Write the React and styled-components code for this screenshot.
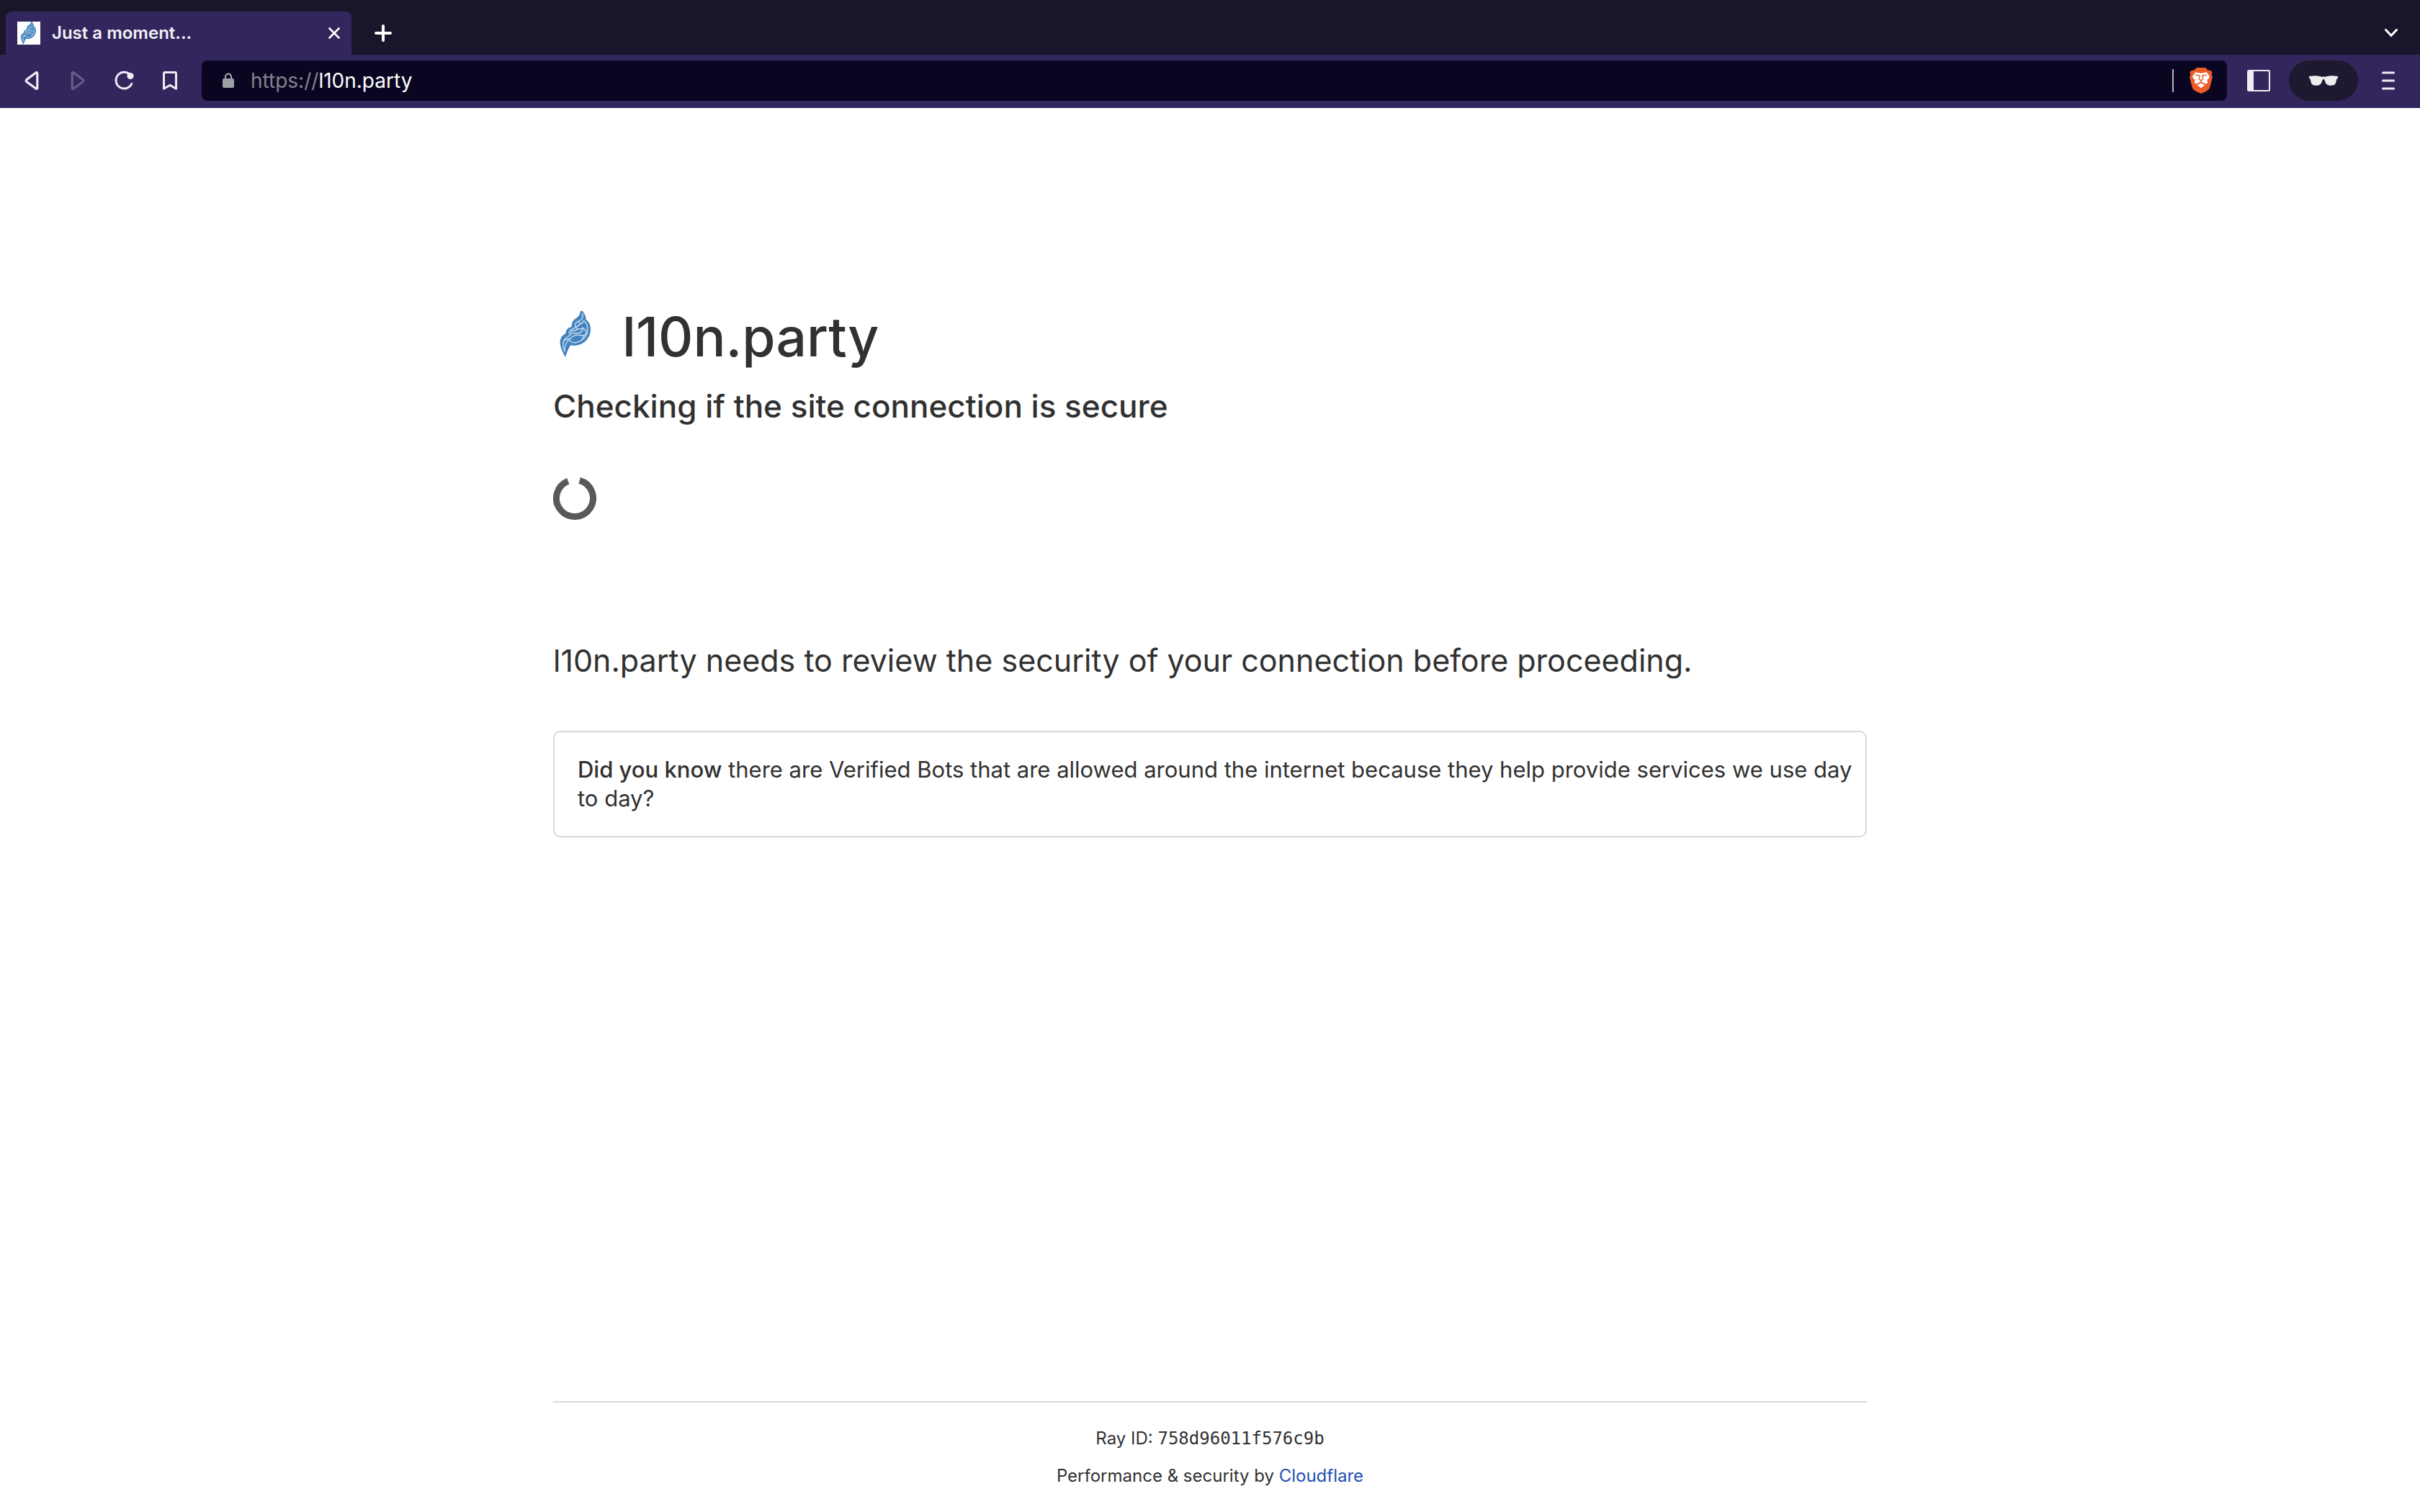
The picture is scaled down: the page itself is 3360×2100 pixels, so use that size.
import React from "react";
import styled, { createGlobalStyle, css } from "styled-components";

const sans = `Inter, "Liberation Sans", sans-serif`;
const mono = `"DejaVu Sans Mono", "Liberation Mono", monospace`;

const GlobalStyle = createGlobalStyle`
  *, *::before, *::after { box-sizing: border-box; }
  body {
    margin: 0;
    background: #fff;
    color: #313131;
    font-family: ${sans};
  }
`;

const Window = styled.div`
  display: flex;
  flex-direction: column;
  min-height: 100vh;
`;

/* ---------- browser chrome ---------- */

const bareButton = css`
  display: flex;
  align-items: center;
  justify-content: center;
  padding: 0;
  border: 0;
  background: none;
  color: inherit;
  font: inherit;
  cursor: pointer;
`;

const TabStrip = styled.header`
  display: flex;
  align-items: flex-end;
  height: 76px;
  padding: 0 16px 0 8px;
  background: #19162b;
  color: #fff;
`;

const Tab = styled.div`
  display: flex;
  align-items: center;
  gap: 16px;
  width: 480px;
  height: 60px;
  padding: 0 8px 0 16px;
  border-radius: 8px 8px 0 0;
  background: #32265c;
`;

const Favicon = styled.span`
  display: flex;
  width: 32px;
  height: 32px;
  background: #fff;
`;

const TabTitle = styled.span`
  flex: 1;
  font-size: 24px;
  line-height: 32px;
  font-weight: 600;
  color: #f1eff7;
`;

const StripButton = styled.button`
  ${bareButton}
  width: ${(p) => p.$width}px;
  height: 60px;
`;

const Spacer = styled.div`
  flex: 1;
`;

const Toolbar = styled.nav`
  display: flex;
  align-items: center;
  height: 74px;
  padding: 0 12px 2px;
  background: #32265c;
  color: #eeebf5;
`;

const ToolButton = styled.button`
  ${bareButton}
  width: 64px;
  height: 56px;
  opacity: ${(p) => (p.disabled ? 0.28 : 1)};
`;

const AddressBar = styled.form`
  display: flex;
  align-items: center;
  flex: 1;
  height: 56px;
  margin: 0 12px;
  padding: 0 20px 0 28px;
  border-radius: 8px;
  background: #0a0622;
  font-size: 28px;
  line-height: 36px;
`;

const Scheme = styled.label`
  margin-left: 22px;
  color: #85828f;
`;

const Address = styled.input`
  flex: 1;
  min-width: 0;
  padding: 0;
  border: 0;
  outline: 0;
  background: none;
  color: #fff;
  font: inherit;
`;

const BarDivider = styled.span`
  width: 2px;
  height: 32px;
  margin-right: 22px;
  background: #b5b4bd;
`;

const ShieldButton = styled.button`
  ${bareButton}
  width: 32px;
  height: 36px;
`;

const PrivatePill = styled.button`
  ${bareButton}
  width: 96px;
  height: 56px;
  margin: 0 10px;
  border-radius: 28px;
  background: #1d1930;
`;

/* ---------- page ---------- */

const Page = styled.div`
  display: flex;
  flex: 1;
  flex-direction: column;
  width: 100%;
  max-width: 1920px;
  margin: 0 auto;
  padding: 0 48px;
`;

const Main = styled.main`
  flex: 1;
  padding-top: 258px;
`;

const SiteHeading = styled.h1`
  display: flex;
  align-items: center;
  gap: 32px;
  margin: 0;
  font-size: 75px;
  line-height: 120px;
  font-weight: 500;
`;

const SiteIcon = styled.span`
  display: flex;
  width: 64px;
  height: 64px;
  margin-bottom: 8px;
`;

const Subtitle = styled.h2`
  margin: 0;
  font-size: 44px;
  line-height: 72px;
  font-weight: 500;
`;

const Explanation = styled.p`
  margin: 0;
  font-size: 43px;
  line-height: 72px;
`;

const Loading = styled.div`
  display: flex;
  height: 281px;
  padding-top: 62px;
`;

const Tip = styled.p`
  margin: 62px 0 0;
  padding: 32px 16px 32px 32px;
  border: 2px solid #d9d9d9;
  border-radius: 10px;
  font-size: 31px;
  line-height: 40px;

  strong {
    font-weight: 500;
  }
`;

const Footer = styled.footer`
  display: flex;
  flex-direction: column;
  align-items: center;
  gap: 16px;
  padding: 32px 0;
  border-top: 2px solid #d9d9d9;
  font-size: 24px;
  line-height: 36px;

  code {
    font-family: ${mono};
    font-size: 24px;
  }

  a {
    color: #1f50b2;
    text-decoration: none;
  }
`;

/* ---------- drawings ---------- */

const Feather = () => (
  <svg viewBox="0 24 192 192" width="100%" height="100%" fill="none" aria-hidden="true">
    <path
      d="M120 22C129 32 137 45 137 60C149 68 157 84 156 101C155 125 142 148 121 159C104 168 87 170 73 166C63 180 57 198 51 216C44 203 31 181 29 158C28 139 37 124 53 118C52 103 61 93 77 90C77 73 83 60 97 53C106 48 112 38 114 24Z"
      fill="#4181be"
    />
    <g stroke="#b4d1ec" strokeWidth="5" strokeLinecap="round" strokeLinejoin="round">
      <path d="M122 34C126 54 119 61 104 67C91 73 89 82 94 93C104 83 120 79 128 64C137 72 145 88 144 103C142 128 122 150 96 155C79 158 67 149 66 139" />
      <path d="M104 67C110 76 117 78 123 72M94 93C85 97 67 101 66 116C75 112 91 119 106 116C119 113 127 104 122 94C114 102 105 102 94 93Z" />
      <path d="M122 94C139 103 143 115 132 123C119 131 107 120 92 125C77 130 70 139 60 150C52 159 47 178 48 192C39 171 39 155 47 143C54 132 66 130 74 121" />
      <path d="M66 139C59 143 49 140 44 150M71 105C83 108 95 106 103 99M128 127L120 145" />
    </g>
  </svg>
);

const CloseIcon = () => (
  <svg width="16" height="16" viewBox="0 0 16 16" fill="none" stroke="currentColor" strokeWidth="2.6" strokeLinecap="round" aria-hidden="true">
    <path d="M1.5 1.5L14.5 14.5M14.5 1.5L1.5 14.5" />
  </svg>
);

const PlusIcon = () => (
  <svg width="24" height="24" viewBox="0 0 24 24" fill="none" stroke="currentColor" strokeWidth="4" strokeLinecap="round" aria-hidden="true">
    <path d="M12 2V22M2 12H22" />
  </svg>
);

const ChevronIcon = () => (
  <svg width="18" height="12" viewBox="0 0 18 12" fill="none" stroke="currentColor" strokeWidth="3" strokeLinecap="round" strokeLinejoin="miter" aria-hidden="true">
    <path d="M1.5 1.5L9 9.3L16.5 1.5" />
  </svg>
);

const TriangleIcon = ({ forward }) => (
  <svg width="20" height="28" viewBox="0 0 20 28" fill="none" stroke="currentColor" strokeWidth="3.2" strokeLinejoin="round" aria-hidden="true">
    <path
      d={
        forward
          ? "M2.2 3.8C2.2 2.5 3.5 2.2 4.5 3.2L16.8 12.4C18.2 13.5 18.2 14.6 16.8 15.7L4.5 24.8C3.5 25.8 2.2 25.4 2.2 24.2Z"
          : "M17.8 3.8C17.8 2.5 16.5 2.2 15.5 3.2L3.2 12.4C1.8 13.5 1.8 14.6 3.2 15.7L15.5 24.8C16.5 25.8 17.8 25.4 17.8 24.2Z"
      }
    />
  </svg>
);

const ReloadIcon = () => (
  <svg width="28" height="28" viewBox="0 0 28 28" fill="none" aria-hidden="true">
    <path d="M22 5.1A11.4 11.4 0 1 0 24.8 18.4" stroke="currentColor" strokeWidth="3" strokeLinecap="round" />
    <circle cx="23" cy="7.6" r="4.6" fill="currentColor" />
  </svg>
);

const BookmarkIcon = () => (
  <svg width="20" height="28" viewBox="0 0 20 28" fill="none" stroke="currentColor" strokeWidth="3" strokeLinejoin="round" aria-hidden="true">
    <path d="M1.5 4.2C1.5 3.1 2.2 2.5 3.2 2.5H16.8C17.8 2.5 18.5 3.1 18.5 4.2V25.3L10 20.2L1.5 25.3Z" />
  </svg>
);

const LockIcon = () => (
  <svg width="18" height="22" viewBox="0 0 18 22" fill="none" aria-hidden="true">
    <rect x="1" y="8" width="16" height="13" rx="2" fill="#9d9fa6" />
    <path d="M5 9V5.6A4 4 0 0 1 13 5.6V9" stroke="#9d9fa6" strokeWidth="2.2" />
  </svg>
);

const LionIcon = () => (
  <svg width="32" height="36" viewBox="0 0 96 108" aria-hidden="true">
    <path d="M29 0H67L77 11C84 9 90 12 95 20L92 29L96 39L85 82C82 91 77 94 70 98L48 108L26 98C19 94 14 91 11 82L0 39L4 29L1 20C6 12 12 9 19 11Z" fill="#ec5b29" />
    <path d="M25 19L48 23L71 19L84 36L80 45L73 51L76 62L67 68L56 62L48 58L40 62L29 68L20 62L23 51L16 45L12 36Z" fill="#fff" />
    <path d="M48 64L64 73L48 85L32 73Z" fill="#fff" />
    <path d="M24 30L42 33M72 30L54 33M43 31L40 47L48 54L56 47L53 31M48 54V62M48 61L32 70M48 61L64 70" fill="none" stroke="#ec5b29" strokeWidth="4" />
  </svg>
);

const SidebarIcon = () => (
  <svg width="32" height="30" viewBox="0 0 32 30" aria-hidden="true">
    <rect x="1" y="1" width="30" height="28" rx="1.5" fill="none" stroke="currentColor" strokeWidth="2" />
    <rect x="1" y="1" width="8" height="28" rx="1" fill="currentColor" />
  </svg>
);

const GlassesIcon = () => (
  <svg width="40" height="14" viewBox="0 0 120 42" fill="#eeeeee" aria-hidden="true">
    <path d="M0 3C18-1 40 0 53 5C58 4 62 4 67 5C80 0 102-1 120 3V11C116 12 115 14 114 19C111 35 108 41 92 41C76 41 70 35 66 23C64 16 62 15 60 15C58 15 56 16 54 23C50 35 44 41 28 41C12 41 9 35 6 19C5 14 4 12 0 11Z" />
  </svg>
);

const MenuIcon = () => (
  <svg width="18" height="26" viewBox="0 0 18 26" fill="none" stroke="currentColor" strokeWidth="3" strokeLinecap="round" aria-hidden="true">
    <path d="M1.5 2H16.5M1.5 13H16.5M1.5 24H16.5" />
  </svg>
);

const Spinner = () => (
  <svg width="60" height="60" viewBox="0 0 60 60" fill="none" role="img" aria-label="Loading">
    <path d="M36.7 5.4A25.5 25.5 0 1 1 20.8 6.2" stroke="#595959" strokeWidth="9" />
  </svg>
);

/* ---------- app ---------- */

export default function App() {
  return (
    <Window>
      <GlobalStyle />
      <TabStrip>
        <Tab>
          <Favicon>
            <Feather />
          </Favicon>
          <TabTitle>Just a moment...</TabTitle>
          <StripButton $width={32} aria-label="Close tab">
            <CloseIcon />
          </StripButton>
        </Tab>
        <StripButton $width={88} aria-label="New tab">
          <PlusIcon />
        </StripButton>
        <Spacer />
        <StripButton $width={48} aria-label="Search tabs">
          <ChevronIcon />
        </StripButton>
      </TabStrip>

      <Toolbar>
        <ToolButton aria-label="Back">
          <TriangleIcon />
        </ToolButton>
        <ToolButton aria-label="Forward" disabled>
          <TriangleIcon forward />
        </ToolButton>
        <ToolButton aria-label="Reload">
          <ReloadIcon />
        </ToolButton>
        <ToolButton aria-label="Bookmark">
          <BookmarkIcon />
        </ToolButton>
        <AddressBar onSubmit={(e) => e.preventDefault()}>
          <LockIcon />
          <Scheme htmlFor="address">https://</Scheme>
          <Address id="address" type="text" defaultValue="l10n.party" spellCheck={false} />
          <BarDivider />
          <ShieldButton type="button" aria-label="Shields">
            <LionIcon />
          </ShieldButton>
        </AddressBar>
        <ToolButton aria-label="Sidebar">
          <SidebarIcon />
        </ToolButton>
        <PrivatePill aria-label="Private window">
          <GlassesIcon />
        </PrivatePill>
        <ToolButton aria-label="Menu">
          <MenuIcon />
        </ToolButton>
      </Toolbar>

      <Page>
        <Main>
          <SiteHeading>
            <SiteIcon>
              <Feather />
            </SiteIcon>
            l10n.party
          </SiteHeading>
          <Subtitle>Checking if the site connection is secure</Subtitle>
          <Loading>
            <Spinner />
          </Loading>
          <Explanation>
            l10n.party needs to review the security of your connection before proceeding.
          </Explanation>
          <Tip>
            <strong>Did you know</strong> there are Verified Bots that are allowed around the
            internet because they help provide services we use day to day?
          </Tip>
        </Main>
        <Footer>
          <div>
            Ray ID: <code>758d96011f576c9b</code>
          </div>
          <div>
            Performance &amp; security by <a href="#cloudflare">Cloudflare</a>
          </div>
        </Footer>
      </Page>
    </Window>
  );
}
